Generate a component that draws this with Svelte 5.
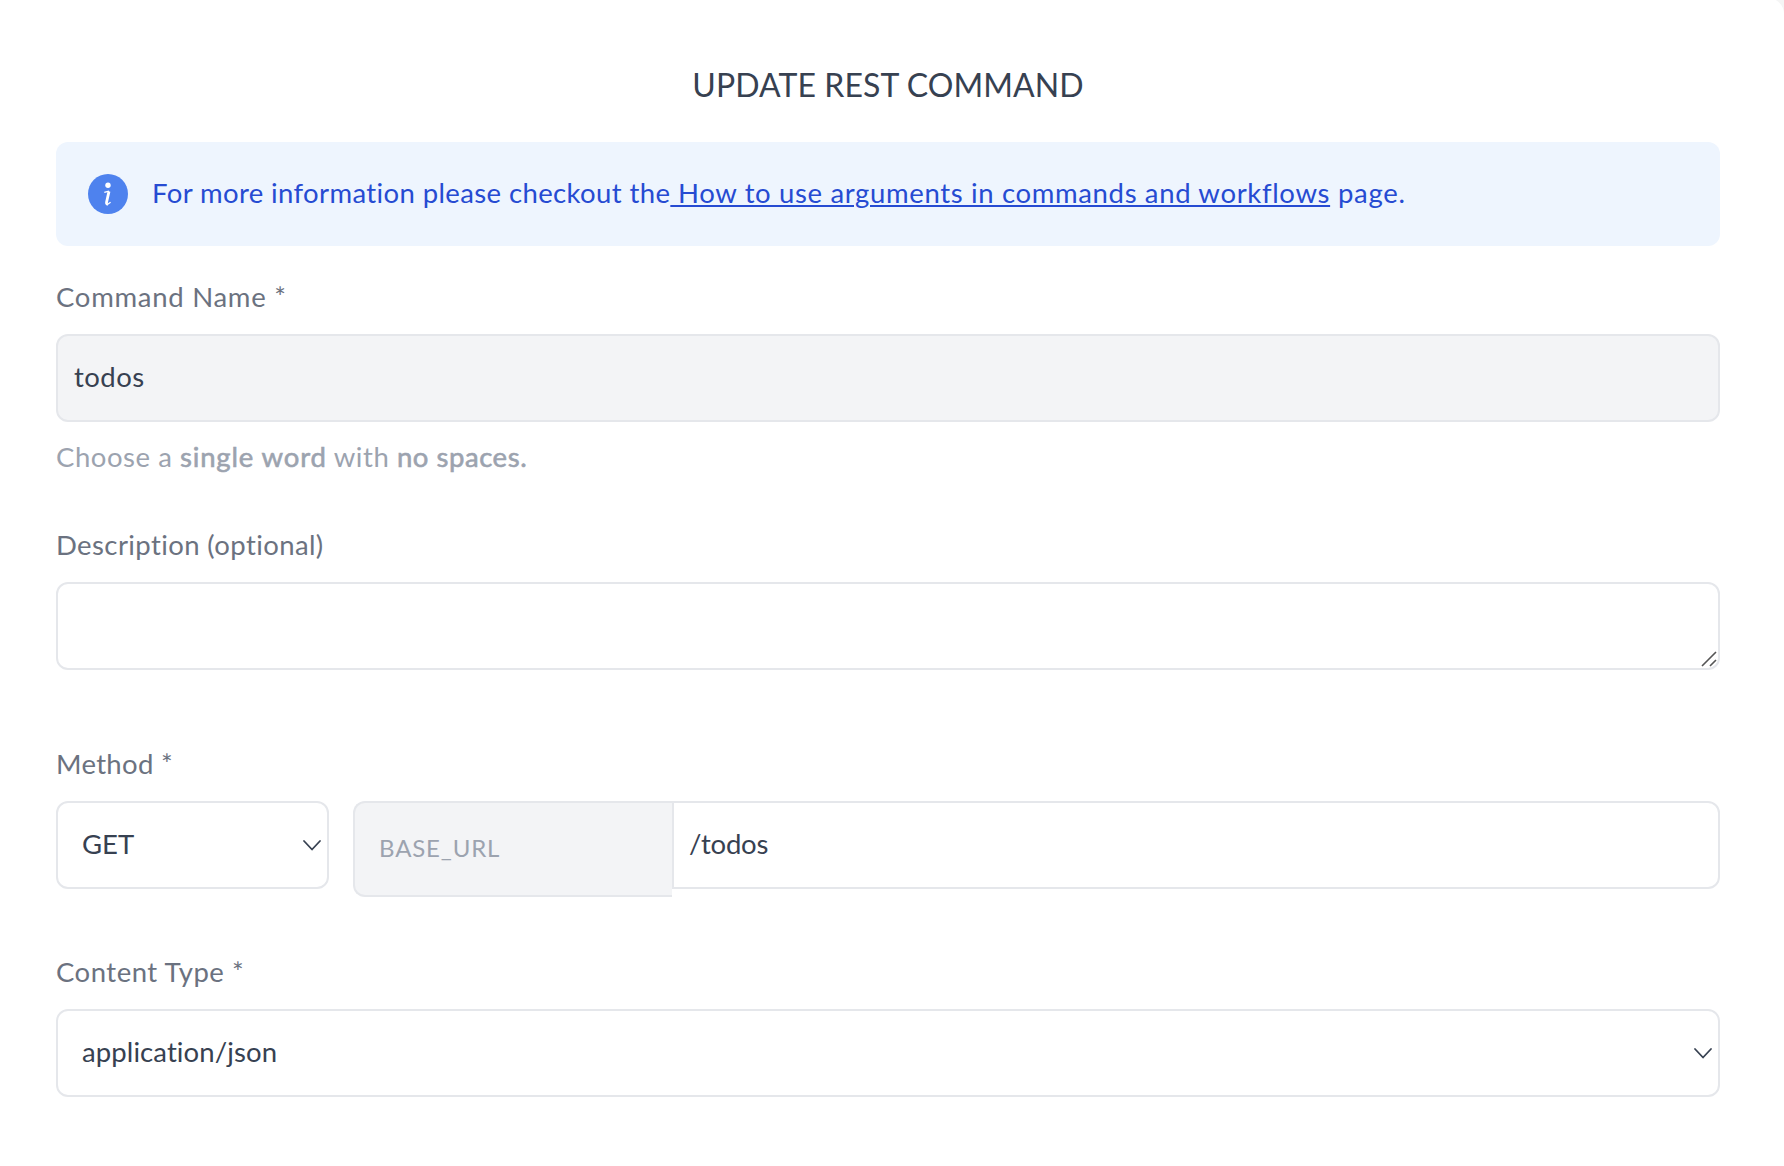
<script>
  let description = $state('');
</script>

{#snippet chevron()}
  <svg class="chevron" width="20" height="14" viewBox="0 0 20 14" aria-hidden="true">
    <path d="M2 3 L10 11.5 L18 3" />
  </svg>
{/snippet}

<main class="panel">
  <h1>UPDATE REST COMMAND</h1>

  <div class="notice">
    <svg class="info" width="40" height="40" viewBox="0 0 40 40" aria-hidden="true">
      <circle class="disc" cx="20" cy="20" r="20" />
      <circle class="mark" cx="20" cy="11.3" r="2.7" />
      <path class="serif" d="M16.3 18.4 L21 17.2 M19 30.8 L22.6 28.2" />
      <path class="stem" d="M21 17.4 L18.6 28 Q18.2 30.2 19.8 30.3" />
    </svg>
    <p><span class="lead">For more information please checkout the</span><a href="#guide" class="link">&nbsp;How to use arguments in commands and workflows</a><span class="tail">&nbsp;page.</span></p>
  </div>

  <section class="field name">
    <div class="label t-name">Command Name *</div>
    <div class="control disabled"><span class="t-todos">todos</span></div>
    <div class="help">Choose a&nbsp;<b class="single">single word</b>&nbsp;with&nbsp;<b>no spaces.</b></div>
  </section>

  <section class="field description">
    <div class="label t-desc">Description (optional)</div>
    <div class="area">
      <textarea class="control" aria-label="Description" bind:value={description}></textarea>
      <svg class="grip" width="16" height="16" viewBox="0 0 16 16" aria-hidden="true">
        <path d="M1 15 L15 1 M9 15 L15 9" />
      </svg>
    </div>
  </section>

  <section class="field method">
    <div class="label t-method">Method *</div>
    <div class="row">
      <div class="control select verb"><span class="t-get">GET</span>{@render chevron()}</div>
      <div class="url">
        <div class="base"><span class="t-base">BASE_URL</span></div>
        <div class="control path"><span class="t-path">/todos</span></div>
      </div>
    </div>
  </section>

  <section class="field content">
    <div class="label t-content">Content Type *</div>
    <div class="control select"><span class="t-json">application/json</span>{@render chevron()}</div>
  </section>
</main>

<style>
  :global(body) {
    background: #f5f5f5;
    overflow: hidden;
  }
  .panel {
    box-sizing: border-box;
    height: 1168px;
    margin-top: -2px;
    padding: 67px 64px 0 56px;
    border-radius: 0 16px 0 0;
    background: #fff;
    color: #374151;
    font-family: Lato, 'Open Sans', sans-serif;
    font-size: 27.5px;
    line-height: 40px;
    font-variant-ligatures: none;
  }
  h1 {
    margin: 0 0 37px;
    text-align: center;
    font-size: 32px;
    font-weight: 400;
    line-height: 40px;
    letter-spacing: 0.08px;
  }
  .notice {
    display: flex;
    align-items: center;
    gap: 24px;
    box-sizing: border-box;
    height: 104px;
    padding: 0 32px;
    border-radius: 12px;
    background: #eef5fe;
    color: #264bd2;
  }
  .notice p {
    margin: 0;
    padding-bottom: 2px;
    white-space: nowrap;
  }
  .lead { letter-spacing: 0.38px; }
  .link {
    color: inherit;
    letter-spacing: 0.65px;
    text-decoration: underline;
    text-decoration-thickness: 2px;
    text-underline-offset: 2px;
  }
  .tail { letter-spacing: 0.75px; }
  .disc { fill: #4e82ee; }
  .mark { fill: #fff; }
  .stem, .serif {
    fill: none;
    stroke: #fff;
    stroke-width: 2.8;
  }
  .serif { stroke-width: 1.3; }
  .label {
    margin: -1px 0 17px;
    color: #6b7280;
  }
  .name { padding-top: 32px; }
  .description { padding-top: 49px; }
  .method { padding-top: 75px; }
  .content { padding-top: 56px; }
  .t-name { letter-spacing: 0.72px; }
  .t-todos { letter-spacing: 0.45px; }
  .t-desc { letter-spacing: 0.4px; }
  .t-method { letter-spacing: 0.32px; }
  .t-content { letter-spacing: 0.5px; }
  .t-path { letter-spacing: -0.2px; margin-left: -1px; }
  .t-json { letter-spacing: 0.1px; }
  .help {
    margin-top: 15px;
    color: #9ca3af;
    letter-spacing: 0.55px;
    white-space: nowrap;
  }
  .help b {
    font-weight: 400;
    -webkit-text-stroke: 0.6px currentColor;
  }
  .help .single { letter-spacing: 0.83px; }
  .control {
    display: flex;
    align-items: center;
    box-sizing: border-box;
    width: 100%;
    height: 88px;
    padding: 0 16px;
    border: 2px solid #e5e7eb;
    border-radius: 12px;
    background: #fff;
  }
  .control span, .base span { padding-bottom: 2px; }
  .disabled { background: #f3f4f6; }
  .area { position: relative; }
  textarea.control {
    display: block;
    resize: none;
    outline: none;
    font: inherit;
    color: inherit;
  }
  .grip {
    position: absolute;
    right: 3px;
    bottom: 3px;
    fill: none;
    stroke: #555;
    stroke-width: 1.6;
  }
  .row { display: flex; gap: 24px; align-items: flex-start; }
  .select { justify-content: space-between; padding: 0 5px 0 24px; }
  .chevron {
    fill: none;
    stroke: #374151;
    stroke-width: 1.8;
    stroke-linecap: round;
    stroke-linejoin: round;
  }
  .verb { flex: none; width: 273px; }
  .url { display: flex; flex: 1; align-items: flex-start; }
  .base {
    display: flex;
    align-items: center;
    box-sizing: border-box;
    width: 319px;
    height: 96px;
    padding-left: 24px;
    border: 2px solid #e5e7eb;
    border-right: 0;
    border-radius: 12px 0 0 12px;
    background: #f3f4f6;
    color: #9ca3af;
    font-size: 24px;
  }
  .t-base { letter-spacing: 0.85px; }
  .path { flex: 1; border-radius: 0 12px 12px 0; }
</style>
